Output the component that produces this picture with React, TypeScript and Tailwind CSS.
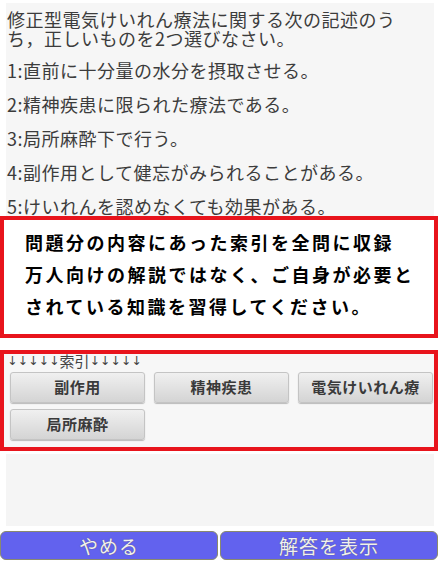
import React from 'react';

const QUESTION = '修正型電気けいれん療法に関する次の記述のうち，正しいものを2つ選びなさい。';

const CHOICES = [
  '1:直前に十分量の水分を摂取させる。',
  '2:精神疾患に限られた療法である。',
  '3:局所麻酔下で行う。',
  '4:副作用として健忘がみられることがある。',
  '5:けいれんを認めなくても効果がある。',
];

const INDEX_TAGS = ['副作用', '精神疾患', '電気けいれん療', '局所麻酔'];

const jp = { fontFamily: '"Noto Sans CJK JP", "Noto Sans", sans-serif' };
const arrows = { fontFamily: '"DejaVu Sans", sans-serif' };

const App: React.FC = () => {
  return (
    <div className="w-[440px] h-[587px] bg-white overflow-hidden" style={jp}>
      {/* Question */}
      <div className="mx-[6px] mt-[3px] bg-[#f6f6f6] pl-[1px] pt-[7px] text-[#3c3c3c] text-[18px] tracking-[0.5px]">
        <p className="leading-[19px] pr-[20px]">{QUESTION}</p>
        {CHOICES.map((c, i) => (
          <p key={c} className={`leading-[19px] whitespace-nowrap ${i === 0 ? 'mt-[13px]' : 'mt-[15px]'}`}>
            {c}
          </p>
        ))}
      </div>

      {/* Notice */}
      <div className="w-[438px] h-[122px] border-4 border-[#e8141c] bg-white pl-[21px] pt-[6px] text-black font-bold text-[18px] tracking-[2.5px] leading-[32px]">
        <p>問題分の内容にあった索引を全問に収録</p>
        <p>万人向けの解説ではなく、ご自身が必要と</p>
        <p>されている知識を習得してください。</p>
      </div>

      {/* Index */}
      <div className="w-[438px] mt-[12px] border-4 border-[#e8141c] bg-[#f7f7f7] pl-[6px] pb-[7px]">
        <div className="h-[14px] leading-[14px] text-[#444] -ml-[3px] flex items-end">
          <span className="text-[12.5px]" style={arrows}>↓↓↓↓↓</span>
          <span className="text-[15px]">索引</span>
          <span className="text-[12.5px]" style={arrows}>↓↓↓↓↓</span>
        </div>
        <div className="mt-[4px] grid grid-cols-[135px_135px_135px] gap-x-[9px] gap-y-[6px]">
          {INDEX_TAGS.map(t => (
            <button
              key={t}
              className="h-[31px] rounded-[3px] border border-[#c4c4c4] bg-gradient-to-b from-[#f0f0f0] to-[#d4d4d4] shadow-[0_1px_1px_rgba(0,0,0,0.25)] text-[15px] font-bold text-[#3a3a3a] tracking-[0.5px] whitespace-nowrap"
            >
              {t}
            </button>
          ))}
        </div>
      </div>

      {/* Blank area */}
      <div className="mx-[6px] mt-[3px] h-[72px] bg-[#f5f5f5]" />

      {/* Footer buttons */}
      <div className="mt-[5px] w-[438px] flex gap-[2px]">
        {['やめる', '解答を表示'].map(label => (
          <button
            key={label}
            className="flex-1 h-[29px] rounded-[6px] border border-[#8a8a6e] bg-[#6262ee] text-[19px] leading-none text-[#f0f0f0] tracking-[1px] [text-shadow:0_0_1px_#555]"
          >
            {label}
          </button>
        ))}
      </div>
    </div>
  );
};

export default App;
